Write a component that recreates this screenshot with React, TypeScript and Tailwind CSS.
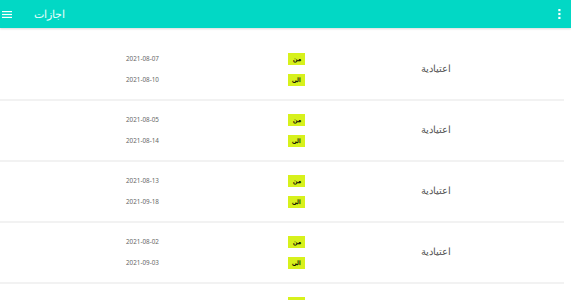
import React from 'react';

const vacations = [
  { from: '2021-08-07', to: '2021-08-10', type: 'اعتيادية' },
  { from: '2021-08-05', to: '2021-08-14', type: 'اعتيادية' },
  { from: '2021-08-13', to: '2021-09-18', type: 'اعتيادية' },
  { from: '2021-08-02', to: '2021-09-03', type: 'اعتيادية' },
  { from: '2021-08-01', to: '2021-08-04', type: 'اعتيادية' },
];

const Badge = ({ label }: { label: string }) => (
  <div className="w-[17px] h-[12px] bg-[#d7f11c] flex items-center justify-center overflow-hidden text-[6px] leading-none text-black font-bold">
    {label}
  </div>
);

const Row = ({ item }: { item: (typeof vacations)[number] }) => (
  <div className="h-[61px] shrink-0 flex flex-col">
    <div className="flex-1 flex items-center">
      <div className="w-[126px]" />
      <div className="w-[34px] flex flex-col gap-[15px] text-[6.3px] leading-[6px] text-[#666]">
        <span>{item.from}</span>
        <span>{item.to}</span>
      </div>
      <div className="w-[128px]" />
      <div className="flex flex-col gap-[9px]">
        <Badge label="من" />
        <Badge label="الى" />
      </div>
      <div className="w-[116px]" />
      <div className="text-[10px] leading-none text-[#555] pb-[3px]" dir="rtl">
        {item.type}
      </div>
    </div>
    <div className="h-[2px] w-[564px] bg-[#f2f2f2]" />
  </div>
);

export default function App() {
  return (
    <div
      className="w-[571px] h-[300px] overflow-hidden bg-white flex flex-col"
      style={{ fontFamily: '"Noto Sans", "Liberation Sans", sans-serif' }}
    >
      <header className="h-[28px] shrink-0 bg-[#02d8c5] flex items-center px-[2px] shadow-[0_1px_2px_rgba(0,0,0,0.15)] relative z-10">
        <svg width="10" height="7" viewBox="0 0 10 7" className="text-white">
          <rect x="0" y="0" width="10" height="1.2" fill="currentColor" />
          <rect x="0" y="2.9" width="10" height="1.2" fill="currentColor" />
          <rect x="0" y="5.8" width="10" height="1.2" fill="currentColor" />
        </svg>
        <span className="ml-[22px] text-[11px] text-[#e8fffc]" dir="rtl">
          اجازات
        </span>
        <div className="flex-1" />
        <svg width="3" height="10" viewBox="0 0 3 10" className="mr-[8px] text-white">
          <rect x="0.3" y="0" width="2.2" height="2.2" fill="currentColor" />
          <rect x="0.3" y="3.9" width="2.2" height="2.2" fill="currentColor" />
          <rect x="0.3" y="7.8" width="2.2" height="2.2" fill="currentColor" />
        </svg>
      </header>
      <div className="flex flex-col pt-[12px]">
        {vacations.map((v, i) => (
          <Row key={i} item={v} />
        ))}
      </div>
    </div>
  );
}
